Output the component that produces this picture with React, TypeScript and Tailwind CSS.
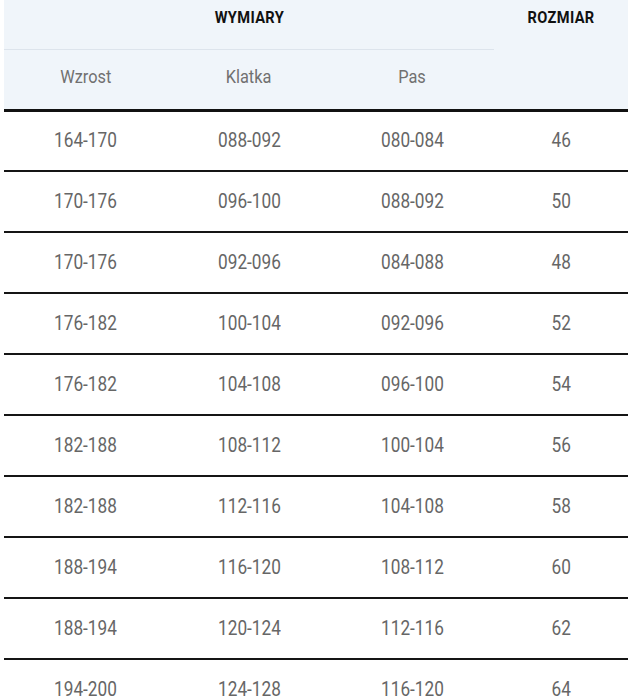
const rows = [
  ["164-170", "088-092", "080-084", "46"],
  ["170-176", "096-100", "088-092", "50"],
  ["170-176", "092-096", "084-088", "48"],
  ["176-182", "100-104", "092-096", "52"],
  ["176-182", "104-108", "096-100", "54"],
  ["182-188", "108-112", "100-104", "56"],
  ["182-188", "112-116", "104-108", "58"],
  ["188-194", "116-120", "108-112", "60"],
  ["188-194", "120-124", "112-116", "62"],
  ["194-200", "124-128", "116-120", "64"],
];

// condensed look: narrow the text a little
const Narrow = ({ children }: { children: React.ReactNode }) => (
  <span className="inline-block scale-x-[0.86]">{children}</span>
);

export default function App() {
  return (
    <div className="min-h-screen bg-white pl-[4px] font-['Roboto',sans-serif]">
      <table className="w-full border-collapse text-center">
        <colgroup>
          <col className="w-[163px]" />
          <col className="w-[164px]" />
          <col className="w-[163px]" />
          <col />
        </colgroup>
        <thead className="bg-[#f0f5fa]">
          <tr>
            <th
              colSpan={3}
              className="h-[49px] border-b border-[#dde4ec] pt-[5px] align-top text-[17px] font-bold tracking-wide text-[#111]"
            >
              <Narrow>WYMIARY</Narrow>
            </th>
            <th
              rowSpan={2}
              className="border-b-[3px] border-[#111] pt-[5px] align-top text-[17px] font-bold tracking-wide text-[#111]"
            >
              <Narrow>ROZMIAR</Narrow>
            </th>
          </tr>
          <tr className="border-b-[3px] border-[#111]">
            <th className="h-[61px] pb-[3px] text-[19px] font-normal text-[#707070]">
              <Narrow>Wzrost</Narrow>
            </th>
            <th className="pb-[3px] text-[19px] font-normal text-[#707070]">
              <Narrow>Klatka</Narrow>
            </th>
            <th className="pb-[3px] text-[19px] font-normal text-[#707070]">
              <Narrow>Pas</Narrow>
            </th>
          </tr>
        </thead>
        <tbody>
          {rows.map((r, i) => (
            <tr key={i} className="border-b-2 border-[#151515]">
              {r.map((c, j) => (
                <td key={j} className="h-[61px] pb-[2px] text-[20px] text-[#666]">
                  <Narrow>{c}</Narrow>
                </td>
              ))}
            </tr>
          ))}
        </tbody>
      </table>
    </div>
  );
}
